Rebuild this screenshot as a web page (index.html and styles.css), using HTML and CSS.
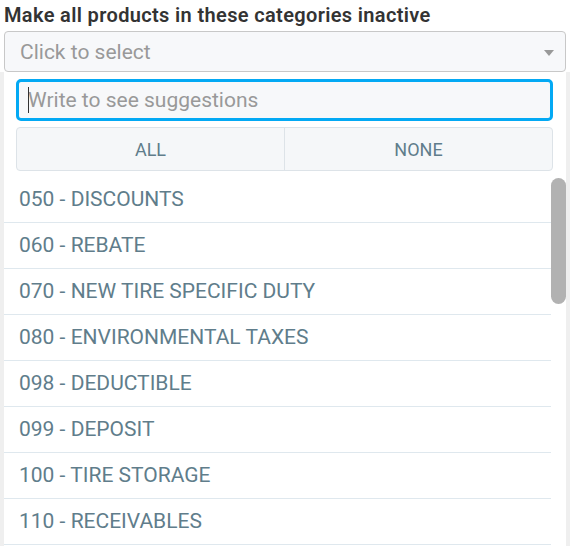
FILE: index.html
```html
<!DOCTYPE html>
<html lang="en">
<head>
  <meta charset="UTF-8">
  <title>Inactive categories</title>
  <meta name="viewport" content="width=device-width, initial-scale=1.0">
  <link rel="stylesheet" href="styles.css">
</head>
<body>

<div class="field">
  <label class="field-label">Make all products in these categories inactive</label>

  <div class="picker-box">
    <span class="placeholder">Click to select</span>
    <span class="caret"></span>
  </div>

  <div class="dropdown">
    <div class="search-wrap">
      <input type="text" class="search" placeholder="Write to see suggestions">
      <span class="text-cursor"></span>
    </div>

    <div class="bulk">
      <button>ALL</button>
      <button>NONE</button>
    </div>

    <div class="options-wrap">
      <ul class="options">
        <li>050 - DISCOUNTS</li>
        <li>060 - REBATE</li>
        <li>070 - NEW TIRE SPECIFIC DUTY</li>
        <li>080 - ENVIRONMENTAL TAXES</li>
        <li>098 - DEDUCTIBLE</li>
        <li>099 - DEPOSIT</li>
        <li>100 - TIRE STORAGE</li>
        <li>110 - RECEIVABLES</li>
      </ul>
      <div class="scrollbar"><div class="thumb"></div></div>
    </div>
  </div>
</div>

</body>
</html>
```

FILE: styles.css
```css
body {
  font-family: Roboto, 'Liberation Sans', sans-serif;
  margin: 0;
  padding: 0;
  background: #fff;
  color: #333;
  overflow: hidden;
}
.field {
  padding: 3px 4px 0 4px;
}
.field-label {
  display: block;
  font-size: 20px;
  font-weight: 600;
  letter-spacing: 0.35px;
  color: #333;
  line-height: 24px;
  margin-bottom: 4px;
}
.picker-box {
  display: flex;
  align-items: center;
  justify-content: space-between;
  height: 39px;
  padding: 0 11px 0 15px;
  border: 1px solid #c8c8c8;
  border-radius: 4px;
  background: #f7f8fa;
}
.placeholder {
  font-size: 21px;
  color: #999;
}
.caret {
  width: 0;
  height: 0;
  border-left: 5px solid transparent;
  border-right: 5px solid transparent;
  border-top: 6px solid #999;
  margin-top: 2px;
}
.dropdown {
  background: #fff;
  box-shadow: 0 0 0 4px #efefef;
  clip-path: inset(0 -4px -4px -4px);
  padding-top: 7px;
}
.search-wrap {
  position: relative;
  margin: 0 13px 0 12px;
}
.search {
  display: block;
  box-sizing: border-box;
  width: 100%;
  height: 42px;
  padding: 0 9px;
  border: 3px solid #03a9f4;
  border-radius: 5px;
  background: #f7f8fa;
  font-family: inherit;
  font-size: 21px;
  color: #333;
  outline: none;
}
.search::placeholder {
  color: #999;
}
.text-cursor {
  position: absolute;
  left: 12px;
  top: 8px;
  width: 1px;
  height: 26px;
  background: #333;
}
.bulk {
  display: flex;
  margin: 6px 13px 0 12px;
  border: 1px solid #dde3e8;
  border-radius: 4px;
  background: #f5f7f9;
  overflow: hidden;
}
.bulk button {
  flex: 1;
  height: 42px;
  border: none;
  background: none;
  font-family: inherit;
  font-size: 18px;
  color: #607d8b;
  cursor: pointer;
}
.bulk button + button {
  border-left: 1px solid #dde3e8;
}
.options-wrap {
  display: flex;
  margin-top: 6px;
  height: 380px;
}
.options {
  flex: 1;
  list-style: none;
  margin: 0;
  padding: 0;
  overflow: hidden;
}
.options li {
  height: 45px;
  line-height: 45px;
  padding-left: 15px;
  border-bottom: 1px solid #dfe8ee;
  font-size: 21px;
  color: #607d8b;
}
.scrollbar {
  width: 15px;
  background: #fff;
}
.thumb {
  height: 126px;
  margin-top: 1px;
  background: #b2b2b2;
  border-radius: 8px;
}
```
